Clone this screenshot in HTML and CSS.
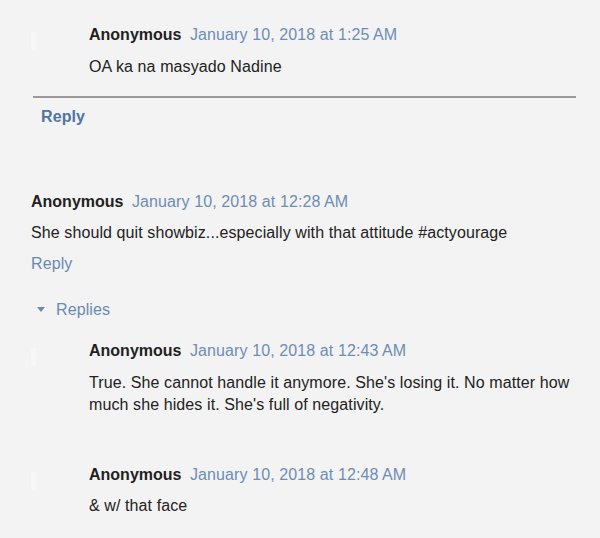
FILE: index.html
```html
<!DOCTYPE html>
<html>
<head>
<meta charset="utf-8">
<link rel="stylesheet" href="styles.css">
</head>
<body>
<div class="page">
  <div class="comment nested first">
    <span class="avatar"></span>
    <div class="head"><b class="name">Anonymous</b> <a class="date">January 10, 2018 at 1:25 AM</a></div>
    <p class="body">OA ka na masyado Nadine</p>
  </div>
  <div class="divider"></div>
  <a class="reply-strong">Reply</a>

  <div class="comment top">
    <div class="head"><b class="name">Anonymous</b> <a class="date">January 10, 2018 at 12:28 AM</a></div>
    <p class="body">She should quit showbiz...especially with that attitude #actyourage</p>
    <a class="reply">Reply</a>
    <div class="replies-toggle"><span class="tri"></span><a class="replies">Replies</a></div>
  </div>

  <div class="comment nested r1">
    <span class="avatar"></span>
    <div class="head"><b class="name">Anonymous</b> <a class="date">January 10, 2018 at 12:43 AM</a></div>
    <p class="body">True. She cannot handle it anymore. She's losing it. No matter how much she hides it. She's full of negativity.</p>
  </div>

  <div class="comment nested r2">
    <span class="avatar"></span>
    <div class="head"><b class="name">Anonymous</b> <a class="date">January 10, 2018 at 12:48 AM</a></div>
    <p class="body">&amp; w/ that face</p>
  </div>
</div>
</body>
</html>
```
FILE: styles.css
```css
html, body {
  margin: 0;
  padding: 0;
  background: #f3f3f3;
}
body {
  font-family: "Liberation Sans", Arial, sans-serif;
  font-size: 16px;
  line-height: 22px;
  letter-spacing: 0.1px;
  color: #222;
  width: 600px;
  height: 538px;
  overflow: hidden;
}
.page {
  display: flex;
  flex-direction: column;
  align-items: flex-start;
  padding-top: 24px;
}
.comment {
  position: relative;
  display: flex;
  flex-direction: column;
  align-items: flex-start;
}
.nested {
  padding-left: 89px;
}
.top {
  padding-left: 31px;
  margin-top: 63px;
}
.avatar {
  position: absolute;
  left: 31px;
  top: 8px;
  width: 5px;
  height: 18px;
  background: #f7f7f7;
}
.head {
  white-space: nowrap;
}
.name {
  font-weight: bold;
  color: #1f1f1f;
  letter-spacing: 0;
}
.date {
  color: #6d8db5;
  margin-left: 4px;
}
.body {
  margin: 10px 0 0 0;
  max-width: 490px;
  color: #222;
}
.top .body {
  margin-top: 9px;
  max-width: none;
}
.divider {
  margin: 18px 0 0 33px;
  width: 543px;
  height: 2px;
  background: #9a9a9a;
}
.reply-strong {
  margin: 8px 0 0 41px;
  font-weight: bold;
  color: #4f75a3;
}
.reply {
  margin-top: 9px;
  color: #6a8ab3;
}
.replies-toggle {
  display: flex;
  align-items: center;
  margin-top: 24px;
  margin-left: 6px;
}
.tri {
  width: 0;
  height: 0;
  border-left: 4px solid transparent;
  border-right: 4px solid transparent;
  border-top: 5px solid #6a8ab3;
  margin-right: 11px;
  margin-top: -2px;
}
.replies {
  color: #6a8ab3;
}
.r1 {
  margin-top: 19px;
}
.r2 {
  margin-top: 48px;
}
.r2 .body {
  margin-top: 9px;
}
```
